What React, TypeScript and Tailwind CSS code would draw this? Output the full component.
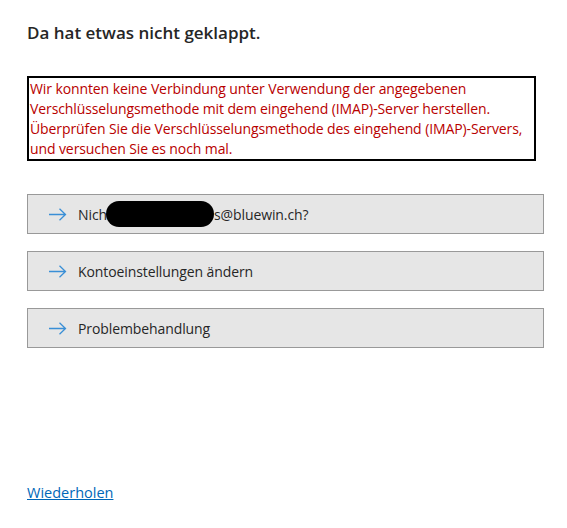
import React from 'react'

function ArrowIcon() {
  return (
    <svg width="19" height="13" viewBox="0 0 19 13" fill="none" className="shrink-0">
      <path d="M1 6.5h16.5M11.5 0.8l6 5.7-6 5.7" stroke="#3a8fd6" strokeWidth="1.3" />
    </svg>
  )
}

function ActionButton({ children }: { children: React.ReactNode }) {
  return (
    <button className="flex h-[40px] w-[517px] items-center gap-[11px] border border-[#999999] bg-[#e6e6e6] pl-[20px] text-left text-[14px] tracking-[-0.1px] text-[#262626]">
      <ArrowIcon />
      <span className="flex items-center">{children}</span>
    </button>
  )
}

export default function App() {
  return (
    <div className="h-[528px] w-[567px] bg-white font-['Open_Sans','Noto_Sans',sans-serif]">
      <div className="flex h-full flex-col px-[27px] pt-[20px] pb-[24px]">
        <h1 className="text-[17px] font-semibold leading-[26px] text-[#262626]">Da hat etwas nicht geklappt.</h1>

        <div className="mt-[30px] w-[509px] border-2 border-black px-[1px] pt-[1px] text-[14px] leading-[20px] tracking-[-0.1px] text-[#b80000]">
          Wir konnten keine Verbindung unter Verwendung der angegebenen Verschlüsselungsmethode mit dem eingehend (IMAP)-Server herstellen.
          Überprüfen Sie die Verschlüsselungsmethode des eingehend (IMAP)-Servers, und versuchen Sie es noch mal.
        </div>

        <div className="mt-[33px] flex flex-col gap-[17px]">
          <ActionButton>
            Nich
            <span className="-ml-px inline-block h-[26px] w-[108px] rounded-full bg-black" />
            s@bluewin.ch?
          </ActionButton>
          <ActionButton>Kontoeinstellungen ändern</ActionButton>
          <ActionButton>Problembehandlung</ActionButton>
        </div>

        <div className="mt-auto">
          <a href="#" className="text-[14.5px] text-[#0067b8] underline">Wiederholen</a>
        </div>
      </div>
    </div>
  )
}
